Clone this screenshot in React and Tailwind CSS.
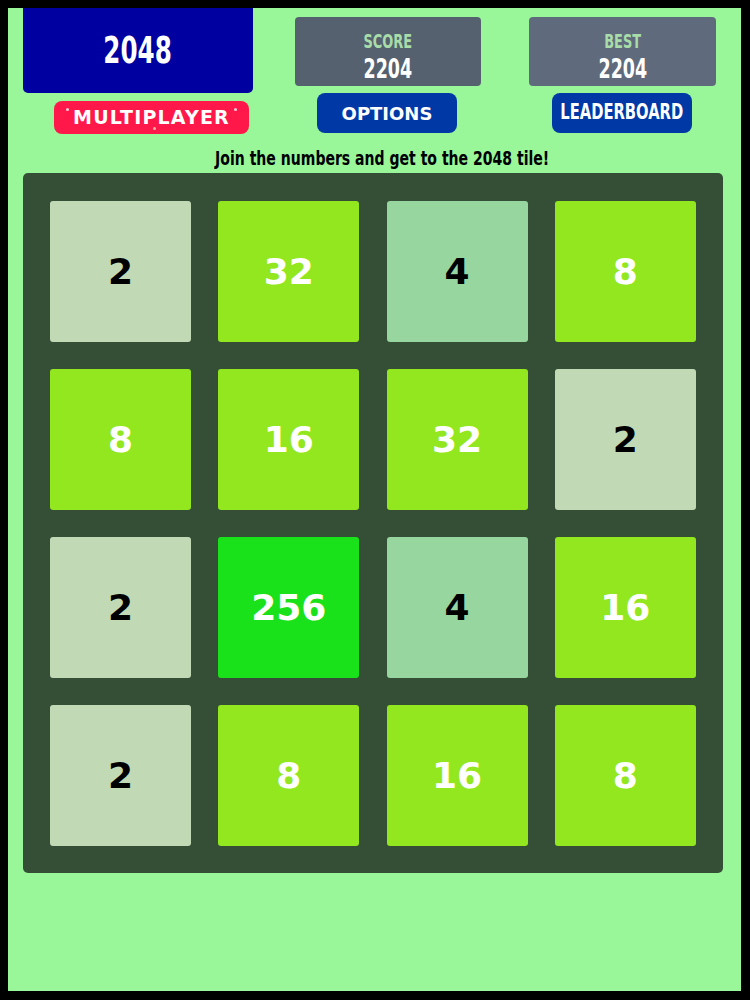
import React from 'react';

const board = [
    [2, 32, 4, 8],
    [8, 16, 32, 2],
    [2, 256, 4, 16],
    [2, 8, 16, 8],
];

const tileStyles = {
    2: 'bg-[#c2d9b6] text-black',
    4: 'bg-[#98d6a0] text-black',
    8: 'bg-[#93e71f] text-white',
    16: 'bg-[#93e71f] text-white',
    32: 'bg-[#93e71f] text-white',
    256: 'bg-[#1ae21a] text-white',
};

function Tile({ value }) {
    return (
        <div className={`w-[141px] h-[141px] rounded-[3px] flex items-center justify-center text-[36px] font-bold font-['DejaVu_Sans',sans-serif] ${tileStyles[value]}`}>
            {value}
        </div>
    );
}

function StatBox({ label, value, className }) {
    return (
        <div className={`h-[69px] rounded-[4px] flex flex-col items-center pt-[12px] gap-[2px] ${className}`}>
            <span className="text-[20px] leading-[24px] font-bold text-[#a8dca8] scale-x-[0.72] font-['DejaVu_Sans_Condensed',sans-serif]">{label}</span>
            <span className="text-[27px] leading-[28px] font-bold text-white scale-x-[0.72] font-['DejaVu_Sans_Condensed',sans-serif]">{value}</span>
        </div>
    );
}

export default function App() {
    return (
        <div className="w-[750px] h-[1000px] bg-black pt-[8px] pl-[8px]">
            <div className="w-[733px] h-[983px] bg-[#99f699] overflow-hidden">
                {/* header */}
                <div className="flex items-start h-[85px]">
                    <div className="ml-[15px] w-[230px] h-[85px] bg-[#0000a0] rounded-b-[5px] flex items-center justify-center">
                        <span className="text-white text-[38px] font-bold scale-x-[0.72] font-['DejaVu_Sans_Condensed',sans-serif]">2048</span>
                    </div>
                    <StatBox label="SCORE" value="2204" className="ml-[42px] mt-[9px] w-[186px] bg-[#56616f]" />
                    <StatBox label="BEST" value="2204" className="ml-[48px] mt-[9px] w-[187px] bg-[#5f6b7c]" />
                </div>

                {/* buttons */}
                <div className="flex items-start h-[40px]">
                    <div className="relative ml-[46px] mt-[8px] w-[195px] h-[33px] bg-[#ff1849] rounded-[8px] flex items-center justify-center">
                        <span className="text-white text-[19px] font-black tracking-[1.2px] font-['DejaVu_Sans',sans-serif]">MULTIPLAYER</span>
                        <span className="absolute left-[12px] top-[7px] w-[3px] h-[3px] rounded-full bg-[#ffd0dc]" />
                        <span className="absolute right-[12px] top-[7px] w-[3px] h-[3px] rounded-full bg-[#ffd0dc]" />
                        <span className="absolute left-[99px] bottom-[4px] w-[3px] h-[3px] rounded-full bg-[#ffb0a0]" />
                    </div>
                    <div className="ml-[68px] w-[140px] h-[40px] bg-[#0039a6] rounded-[8px] flex items-center justify-center">
                        <span className="text-white text-[18px] font-bold font-['DejaVu_Sans',sans-serif]">OPTIONS</span>
                    </div>
                    <div className="ml-[95px] w-[140px] h-[40px] bg-[#0039a6] rounded-[8px] flex items-center justify-center">
                        <span className="text-white text-[21px] font-bold scale-x-[0.78] whitespace-nowrap font-['DejaVu_Sans_Condensed',sans-serif]">LEADERBOARD</span>
                    </div>
                </div>

                {/* hint */}
                <div className="h-[40px] pt-[11px] pl-[16px] flex justify-center">
                    <span className="block text-black text-[20px] leading-[28px] font-bold whitespace-nowrap scale-x-[0.78] font-['DejaVu_Sans_Condensed',sans-serif]">
                        Join the numbers and get to the 2048 tile!
                    </span>
                </div>

                {/* board */}
                <div className="ml-[15px] w-[700px] px-[27px] pt-[28px] pb-[27px] bg-[#344f35] rounded-[5px] grid grid-cols-4 gap-[27px]">
                    {board.flat().map((v, i) => (
                        <Tile key={i} value={v} />
                    ))}
                </div>
            </div>
        </div>
    );
}
